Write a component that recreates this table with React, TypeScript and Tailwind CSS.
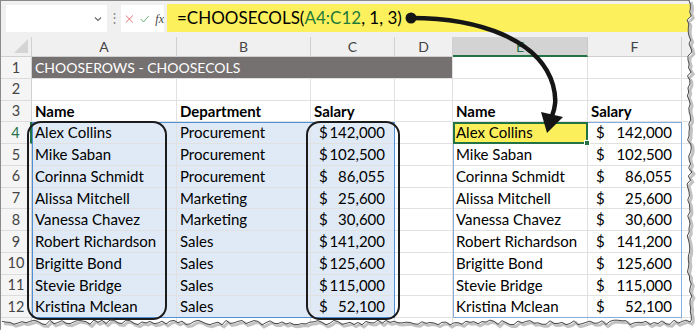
import React from "react";

const COL = ["", "col-start-1", "col-start-2", "col-start-3", "col-start-4", "col-start-5", "col-start-6", "col-start-7", "col-start-8"];
const ROW = ["", "row-start-1", "row-start-2", "row-start-3", "row-start-4", "row-start-5", "row-start-6", "row-start-7", "row-start-8", "row-start-9", "row-start-10", "row-start-11", "row-start-12", "row-start-13", "row-start-14", "row-start-15"];

const people = [
  ["Alex Collins", "Procurement", "142,000"],
  ["Mike Saban", "Procurement", "102,500"],
  ["Corinna Schmidt", "Procurement", "86,055"],
  ["Alissa Mitchell", "Marketing", "25,600"],
  ["Vanessa Chavez", "Marketing", "30,600"],
  ["Robert Richardson", "Sales", "141,200"],
  ["Brigitte Bond", "Sales", "125,600"],
  ["Stevie Bridge", "Sales", "115,000"],
  ["Kristina Mclean", "Sales", "52,100"],
];

const letters = ["A", "B", "C", "D", "E", "F", ""];

function Cell({ r, c, className = "", children }: { r: number; c: number; className?: string; children?: React.ReactNode }) {
  return (
    <div className={`${ROW[r + 1]} ${COL[c]} flex items-center overflow-hidden whitespace-nowrap border-b border-r border-[#e1e1e1] ${className}`}>
      {children}
    </div>
  );
}

function Money({ v }: { v: string }) {
  return (
    <div className="flex w-full justify-between pl-[8px] pr-[9px]">
      <span>$</span>
      <span>{v}</span>
    </div>
  );
}

function tornEdge() {
  const rnd = (i: number) => {
    const s = Math.sin(i * 12.9898 + 4.1) * 43758.5453;
    return s - Math.floor(s);
  };
  const pts: [number, number][] = [];
  for (let y = 0; y <= 320; y += 4) pts.push([689 + rnd(y) * 5 - 2, y]);
  for (let x = 690; x >= 0; x -= 4) pts.push([x, 322 + rnd(x + 1000) * 5 - 2]);
  return pts;
}

function Torn() {
  const pts = tornEdge();
  const line = pts.map((p) => p.join(",")).join(" ");
  const shadow = pts.map(([x, y]) => `${x + 2},${y + 2}`).join(" ");
  const poly = `700,0 ${line} 0,336 700,336`;
  return (
    <svg className="pointer-events-none absolute left-0 top-0" width={700} height={336}>
      <polygon points={poly} fill="#ffffff" />
      <polyline points={shadow} fill="none" stroke="#9a9a9a" strokeWidth={3} opacity={0.6} />
      <polyline points={line} fill="none" stroke="#4a4a4a" strokeWidth={1} />
    </svg>
  );
}

export default function App() {
  const cells: React.ReactNode[] = [];

  // column headers
  cells.push(
    <div key="corner" className="relative col-start-1 row-start-1 border-b border-r border-[#d0d0d0] bg-[#f0f0f0]">
      <div className="absolute bottom-[3px] right-[3px] h-0 w-0 border-b-[14px] border-l-[14px] border-b-[#d4d4d4] border-l-transparent" />
    </div>
  );
  letters.forEach((l, i) => {
    const sel = l === "E";
    cells.push(
      <div
        key={"h" + i}
        className={`${COL[i + 2]} row-start-1 flex items-center justify-center border-r text-[14px] ${
          sel ? "border-b-2 border-r-[#c8c8c8] border-b-[#217346] bg-[#d3d3d3] text-[#217346]" : "border-b border-[#d0d0d0] bg-[#f0f0f0] text-[#444]"
        }`}
      >
        {l}
      </div>
    );
  });

  for (let r = 1; r <= 13; r++) {
    const sel = r === 4;
    cells.push(
      <div
        key={"r" + r}
        className={`${ROW[r + 1]} col-start-1 flex items-center justify-center border-b border-[#dcdcdc] bg-[#f5f5f5] text-[14.5px] ${
          sel ? "border-r-2 border-r-[#217346] text-[#217346]" : "border-r border-r-[#d0d0d0] text-[#444]"
        }`}
      >
        {r <= 12 ? r : ""}
      </div>
    );
    for (let c = 2; c <= 8; c++) {
      const k = `${r}-${c}`;
      if (r === 1) {
        if (c === 2) {
          cells.push(
            <div key={k} className="col-span-4 col-start-2 row-start-2 flex items-center border-b border-r border-[#e1e1e1] bg-[#767171] pl-[3px] text-[14px] text-white">
              CHOOSEROWS - CHOOSECOLS
            </div>
          );
        } else if (c > 5) {
          cells.push(<Cell key={k} r={r} c={c} />);
        }
        continue;
      }
      if (r === 3) {
        const t: Record<number, string> = { 2: "Name", 3: "Department", 4: "Salary", 6: "Name", 7: "Salary" };
        cells.push(
          <Cell key={k} r={r} c={c} className="pl-[3px] font-bold">
            {t[c] ?? ""}
          </Cell>
        );
        continue;
      }
      if (r >= 4 && r <= 12) {
        const p = people[r - 4];
        const blue = c <= 4 ? "bg-[#dfeaf6] border-[#d3dde9]" : "";
        let content: React.ReactNode = null;
        let extra = "pl-[3px]";
        if (c === 2 || c === 6) content = p[0];
        if (c === 3) content = p[1];
        if (c === 4 || c === 7) {
          content = <Money v={p[2]} />;
          extra = "";
        }
        if (c === 6 && r === 4) extra += " bg-[#fbef5c]";
        cells.push(
          <Cell key={k} r={r} c={c} className={`${blue} ${extra}`}>
            {content}
          </Cell>
        );
        continue;
      }
      cells.push(<Cell key={k} r={r} c={c} />);
    }
  }

  return (
    <div className="relative h-[336px] w-[700px] overflow-hidden bg-white font-['Lato',sans-serif] text-[15px] text-black">
      <div className="h-[330px] border-l border-t border-[#8a8a8a] bg-white">
        {/* formula bar */}
        <div className="flex h-[36px] items-start bg-[#f0f0f0] pt-[3px]">
          <div className="ml-[5px] mt-[1px] flex h-[27px] w-[101px] items-center justify-end bg-white pr-[4px] text-[#666]">
            <svg width="10" height="10" viewBox="0 0 10 10">
              <path d="M2 3.5 L5 6.5 L8 3.5" fill="none" stroke="#666" strokeWidth="1.1" />
            </svg>
          </div>
          <div className="flex h-[28px] w-[14px] items-center justify-center text-[13px] text-[#888]">⋮</div>
          <div className="mt-[1px] flex h-[27px] w-[43px] items-center gap-[6px] bg-white pl-[4px]">
            <svg width="10" height="10" viewBox="0 0 10 10">
              <path d="M1 1 L9 9 M9 1 L1 9" stroke="#e06b6b" strokeWidth="1.1" />
            </svg>
            <svg width="11" height="10" viewBox="0 0 11 10">
              <path d="M1 5 L4 8.5 L10 1.5" fill="none" stroke="#6bb07a" strokeWidth="1.1" />
            </svg>
            <span className="font-['Liberation_Serif',serif] text-[12px] italic text-[#444]">fx</span>
          </div>
          <div className="ml-[3px] flex h-[28px] flex-1 items-center bg-[#fcf05c] pl-[10px] text-[17px]">
            =CHOOSECOLS(<span className="text-[#1f7a3a]">A4:C12</span>, 1, 3)
          </div>
        </div>

        {/* sheet grid */}
        <div className="grid grid-cols-[31px_145px_134px_84px_58px_135px_94px_40px] grid-rows-[20px_repeat(13,21.75px)]">
          {cells}

          {/* range highlight A4:C12 */}
          <div className="pointer-events-none col-span-3 col-start-2 row-span-9 row-start-5 border border-[#4f8fd6]" />
          {/* spill range E4:F12 */}
          <div className="pointer-events-none col-span-2 col-start-6 row-span-9 row-start-5 border border-[#86aede]" />
          {/* active cell E4 */}
          <div className="pointer-events-none relative col-start-6 row-start-5 border-2 border-[#217346]">
            <div className="absolute -bottom-[4px] -right-[4px] h-[6px] w-[6px] border border-white bg-[#217346]" />
          </div>
          {/* callout rounded boxes */}
          <div className="pointer-events-none col-start-2 row-span-9 row-start-5 -mb-[2px] -ml-[5px] -mt-[1px] mr-[10px] rounded-[14px] border-2 border-[#1b1b1b]" />
          <div className="pointer-events-none col-start-4 row-span-9 row-start-5 -mb-[2px] -ml-[5px] -mr-[5px] -mt-[1px] rounded-[14px] border-2 border-[#1b1b1b]" />
        </div>
      </div>

      {/* arrow */}
      <svg className="pointer-events-none absolute left-0 top-0" width={700} height={336}>
        <circle cx={411} cy={18} r={5.5} fill="#151515" />
        <path d="M411 18 C 480 18 540 40 553 85 C 557 100 555 108 552 116" stroke="#151515" strokeWidth={4.5} fill="none" strokeLinecap="round" />
        <path d="M541 112 L563 117 L547 133 Z" fill="#151515" />
      </svg>

      <Torn />
    </div>
  );
}
